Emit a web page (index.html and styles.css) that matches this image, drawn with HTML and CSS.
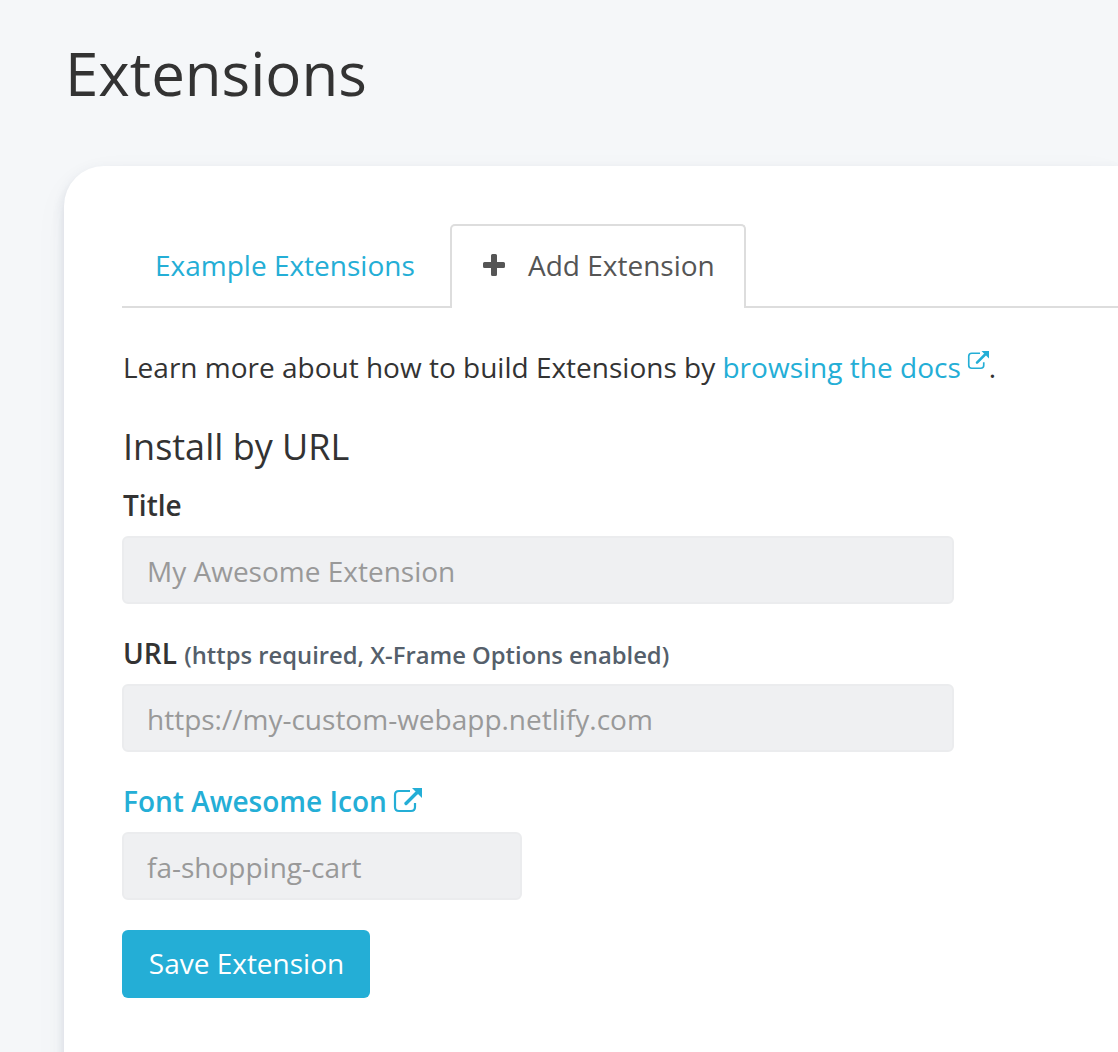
FILE: index.html
```
<!DOCTYPE html>
<html lang="en">
<head>
<meta charset="utf-8">
<title>Extensions</title>
<link rel="stylesheet" href="styles.css">
</head>
<body>
<h1 class="page-title">Extensions</h1>
<main class="panel">
  <nav class="tabs">
    <a class="tab"><span>Example Extensions</span></a>
    <a class="tab tab-active">
      <svg class="plus" viewBox="0 0 22 22"><path d="M9.500 0h3q1.500 0 1.500 1.500V8h6.500q1.500 0 1.500 1.500v3q0 1.500-1.500 1.500H14v6.500q0 1.500-1.500 1.500h-3Q8 22 8 20.500V14H1.500Q0 14 0 12.500v-3Q0 8 1.500 8H8V1.500Q8 0 9.500 0z"/></svg>
      <span>Add Extension</span>
    </a>
    <span class="tabs-rest"></span>
  </nav>
  <p class="intro"><span class="intro-text">Learn more about how to build Extensions by</span> <a class="link docs">browsing the docs</a><svg class="external external-small" viewBox="0 0 28 24"><path class="box" d="M16 3H5Q1 3 1 7v12q0 4 4 4h12q4 0 4-4v-4"/><path class="arrow" d="M12 15.500 22.500 5"/><path class="head" d="M18 0h10v10z"/></svg><span>.</span></p>
  <h2 class="section-title">Install by URL</h2>
  <form class="form">
    <label class="label" for="title"><span>Title</span></label>
    <input class="field" id="title" placeholder="My Awesome Extension">
    <label class="label" for="url"><span>URL</span> <small class="hint">(https required, X-Frame Options enabled)</small></label>
    <input class="field" id="url" placeholder="https://my-custom-webapp.netlify.com">
    <label class="label link" for="icon"><span>Font Awesome Icon</span><svg class="external" viewBox="0 0 28 24"><path class="box" d="M16 3H5Q1 3 1 7v12q0 4 4 4h12q4 0 4-4v-4"/><path class="arrow" d="M12 15.500 22.500 5"/><path class="head" d="M18 0h10v10z"/></svg></label>
    <input class="field field-short" id="icon" placeholder="fa-shopping-cart">
    <button class="save" type="button">Save Extension</button>
  </form>
</main>
</body>
</html>
```
FILE: styles.css
```
* { box-sizing: border-box; }
body {
  margin: 0;
  padding: 37px 0 0 64px;
  height: 1052px;
  overflow: hidden;
  background: #f5f7f9;
  color: #333;
  font: 28px/40px "Open Sans", sans-serif;
}
.page-title {
  margin: 0 0 57px 1px;
  font-size: 60px;
  line-height: 72px;
  font-weight: 400;
}
.panel {
  height: 1000px;
  padding: 58px 0 0 58px;
  background: #fff;
  border-radius: 40px 0 0 0;
  box-shadow: 0 6px 12px rgba(80, 95, 130, 0.2), 0 12px 40px rgba(80, 95, 110, 0.03);
}
.tabs { display: flex; height: 84px; }
.tab {
  width: 328px;
  padding: 21px 0 0 33px;
  border-bottom: 2px solid #ddd;
  color: #24aed6;
  white-space: nowrap;
}
.tab-active {
  display: flex;
  width: 296px;
  padding: 19px 0 0 31px;
  border: 2px solid #ddd;
  border-bottom: 0;
  border-radius: 5px 5px 0 0;
  color: #555;
}
.tab-active .plus { margin: 9px 23px 0 0; }
.tabs-rest { flex: 1; border-bottom: 2px solid #ddd; }
.plus { width: 22px; height: 22px; fill: #555; }
.link { color: #24aed6; }
.intro { margin: 39px 0 40px; padding-left: 1px; white-space: nowrap; }
.docs { letter-spacing: 0.02px; }
.section-title {
  margin: 0 0 18px;
  padding-left: 1px;
  font-size: 36px;
  font-weight: 400;
}
.form { display: flex; flex-direction: column; align-items: flex-start; }
.label { height: 40px; margin-bottom: 11px; padding-left: 1px; font-weight: 600; white-space: nowrap; }
.hint { font-size: 23.8px; color: #555f6b; }
.field {
  width: 832px;
  height: 68px;
  margin: 0 0 29px;
  padding: 2px 23px 0;
  border: 2px solid #ebecee;
  border-radius: 6px;
  background: #eff0f2;
  font: inherit;
}
.field::placeholder { color: #999; opacity: 1; }
.field-short { width: 400px; margin-bottom: 30px; }
.save {
  width: 248px;
  height: 68px;
  padding: 0 0 2px 1px;
  border: 0;
  border-radius: 6px;
  background: #24aed6;
  color: #fff;
  font: inherit;
}
.external {
  width: 28px;
  height: 24px;
  margin-left: 7px;
  overflow: visible;
  fill: none;
  stroke: #24aed6;
  stroke-width: 2.2;
}
.external .arrow { stroke-width: 3.4; stroke-linecap: round; }
.external .head { fill: #24aed6; stroke: none; }
.external-small { width: 21px; height: 18px; vertical-align: 9px; }
```
